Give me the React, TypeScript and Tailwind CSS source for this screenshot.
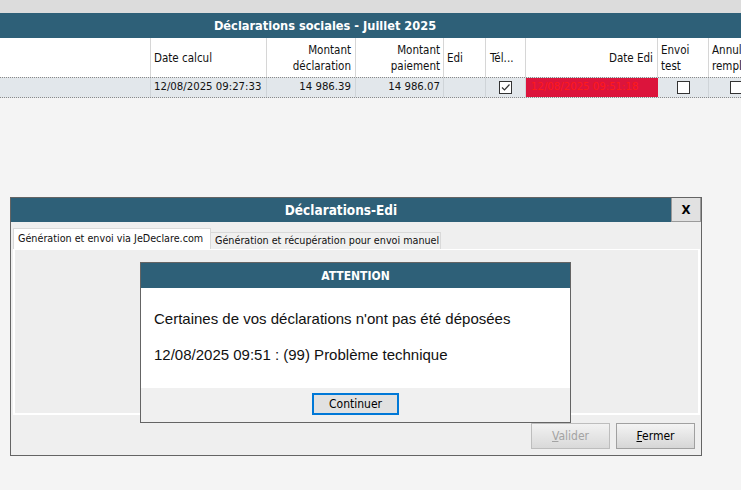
const ui = "font-['DejaVu_Sans_Condensed','DejaVu_Sans',sans-serif]";
const arial = "font-['Liberation_Sans',Arial,sans-serif]";

function Box({ checked = false }: { checked?: boolean }) {
  return (
    <div className="flex h-[13px] w-[13px] shrink-0 items-center justify-center border border-[#333] bg-white">
      {checked && (
        <svg width="11" height="11" viewBox="0 0 11 11" fill="none">
          <path d="M2 5.5 L4.5 8 L9.5 2.5" stroke="#333" strokeWidth="1.2" />
        </svg>
      )}
    </div>
  );
}

const cols = [
  "w-[151px]",
  "w-[116px]",
  "w-[89px]",
  "w-[88px]",
  "w-[42px]",
  "w-[40px]",
  "w-[132px]",
  "w-[51px]",
];

export default function App() {
  return (
    <div className={`flex h-[490px] w-[741px] flex-col overflow-hidden bg-[#f4f4f4] text-[11.5px] text-[#111] ${ui}`}>
      <div className="h-[13px] shrink-0 bg-[#dcdcdc]" />
      <div className="flex h-[25px] shrink-0 items-center justify-center bg-[#2e6078] pr-[91px] text-[12.7px] font-bold text-white">
        Déclarations sociales - Juillet 2025
      </div>

      {/* header */}
      <div className="flex h-[39px] shrink-0 bg-white leading-[16px]">
        <div className={`${cols[0]} shrink-0 border-r border-[#d6d6d6]`} />
        <div className={`${cols[1]} flex shrink-0 items-center border-r border-[#d6d6d6] pl-[3px]`}>Date calcul</div>
        <div className={`${cols[2]} flex shrink-0 flex-col justify-center border-r border-[#d6d6d6] pr-[4px] text-right`}>
          <span>Montant</span>
          <span>déclaration</span>
        </div>
        <div className={`${cols[3]} flex shrink-0 flex-col justify-center border-r border-[#d6d6d6] pr-[3px] text-right`}>
          <span>Montant</span>
          <span>paiement</span>
        </div>
        <div className={`${cols[4]} flex shrink-0 items-center border-r border-[#d6d6d6] pl-[3px]`}>Edi</div>
        <div className={`${cols[5]} flex shrink-0 items-center border-r border-[#d6d6d6] pl-[4px]`}>Tél...</div>
        <div className={`${cols[6]} flex shrink-0 items-center justify-end border-r border-[#d6d6d6] pr-[4px]`}>Date Edi</div>
        <div className={`${cols[7]} flex shrink-0 flex-col justify-center border-r border-[#d6d6d6] pl-[3px]`}>
          <span>Envoi</span>
          <span>test</span>
        </div>
        <div className="flex w-[120px] shrink-0 flex-col justify-center whitespace-nowrap pl-[3px]">
          <span>Annulation</span>
          <span>remplacement</span>
        </div>
      </div>

      {/* data row */}
      <div className="flex h-[21px] shrink-0 border-y border-dotted border-[#8a8a8a] bg-[#e2e7eb] text-[11.3px]">
        <div className={`${cols[0]} shrink-0 border-r border-[#cfd4d8]`} />
        <div className={`${cols[1]} flex shrink-0 items-center border-r border-[#cfd4d8] pl-[3px]`}>12/08/2025 09:27:33</div>
        <div className={`${cols[2]} flex shrink-0 items-center justify-end border-r border-[#cfd4d8] pr-[4px]`}>14 986.39</div>
        <div className={`${cols[3]} flex shrink-0 items-center justify-end border-r border-[#cfd4d8] pr-[3px]`}>14 986.07</div>
        <div className={`${cols[4]} shrink-0 border-r border-[#cfd4d8]`} />
        <div className={`${cols[5]} flex shrink-0 items-center justify-center border-r border-[#cfd4d8]`}>
          <Box checked />
        </div>
        <div className={`${cols[6]} flex shrink-0 items-center bg-[#dc143c] pl-[5px] text-[#ff1a1a]`}>12/08/2025 09:51:18</div>
        <div className={`${cols[7]} flex shrink-0 items-center justify-center border-r border-[#cfd4d8]`}>
          <Box />
        </div>
        <div className="flex w-[120px] shrink-0 items-center pl-[21px]">
          <Box />
        </div>
      </div>

      {/* Déclarations-Edi window */}
      <div className="relative ml-[10px] mt-[99px] flex h-[259px] w-[692px] shrink-0 flex-col border border-[#646464] bg-[#efefef]">
        <div className="flex h-[24px] items-stretch bg-[#2e6078]">
          <div className="flex flex-1 items-center justify-center text-[13.5px] font-bold text-white">
            Déclarations-Edi
          </div>
          <div className="flex w-[30px] items-center justify-center border border-t-0 border-[#9a9a9a] bg-[#e1e1e1] text-[13px] font-bold text-black">
            X
          </div>
        </div>

        <div className="flex flex-1 flex-col px-[2px] pt-[6px] text-[10.7px]">
          <div className="flex items-end whitespace-nowrap">
            <div className="flex h-[21px] w-[198px] items-center border border-b-0 border-[#d9d9d9] bg-white pl-[4px]">
              Génération et envoi via JeDeclare.com
            </div>
            <div className="flex h-[17px] w-[230px] items-center border border-b-0 border-l-0 border-[#d9d9d9] bg-[#f0f0f0] pl-[4px]">
              Génération et récupération pour envoi manuel
            </div>
          </div>
          <div className="h-[166px] w-[687px] border-2 border-t border-white bg-[#eeeeee]" />
          <div className="mt-[8px] flex justify-end gap-[6px] pr-[4px]">
            <button
              type="button"
              disabled
              className="h-[26px] w-[79px] border border-[#bdbdbd] bg-gradient-to-b from-[#f2f2f2] to-[#d9d9d9] text-[12px] text-[#a3a3a3]"
            >
              <span className="underline">V</span>alider
            </button>
            <button
              type="button"
              className="h-[26px] w-[79px] border border-[#a0a0a0] bg-gradient-to-b from-[#f4f4f4] to-[#d6d6d6] text-[12px] text-black"
            >
              <span className="underline">F</span>ermer
            </button>
          </div>
        </div>

        {/* ATTENTION message box */}
        <div className="absolute left-[129px] top-[64px] flex h-[161px] w-[431px] flex-col border border-[#646464] bg-[#f0f0f0]">
          <div className="flex h-[25px] items-center justify-center bg-[#2e6078] text-[12px] font-bold text-white">
            ATTENTION
          </div>
          <div className={`flex h-[100px] flex-col bg-white pl-[13px] pt-[22px] text-[15px] text-[#111] ${arial}`}>
            <div className="leading-[18px]">Certaines de vos déclarations n'ont pas été déposées</div>
            <div className="mt-[18px] leading-[18px]">12/08/2025 09:51 : (99) Problème technique</div>
          </div>
          <div className="flex flex-1 items-start justify-center pt-[5px]">
            <button
              type="button"
              className="h-[22px] w-[87px] border-2 border-[#0078d7] bg-[#e1e1e1] text-[12px] text-black"
            >
              Continuer
            </button>
          </div>
        </div>
      </div>
    </div>
  );
}
